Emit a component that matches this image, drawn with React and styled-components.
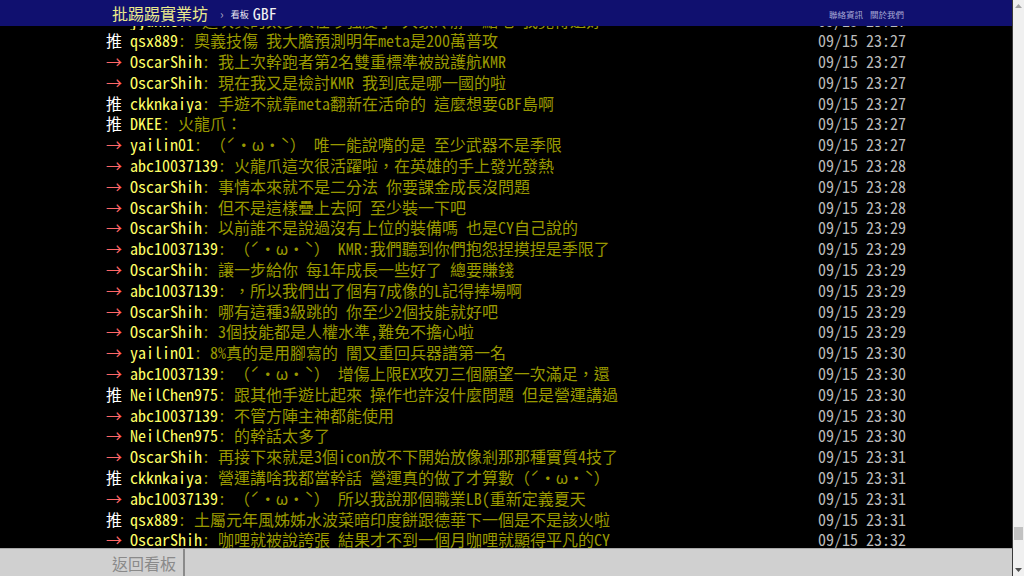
import React from "react";
import styled, { createGlobalStyle } from "styled-components";

const GlobalStyle = createGlobalStyle`
  html, body {
    margin: 0;
    padding: 0;
    height: 100%;
    overflow: hidden;
    background: #000;
  }
  #root { height: 100%; }
`;

const MONO = `"Noto Sans Mono CJK TC", "Noto Sans CJK TC", "Liberation Mono", monospace`;

const Page = styled.div`
  display: flex;
  width: 100vw;
  height: 100vh;
  font-family: ${MONO};
`;

const Main = styled.div`
  flex: 1;
  min-width: 0;
  display: flex;
  flex-direction: column;
  background: #000;
`;

const Topbar = styled.header`
  flex-shrink: 0;
  height: 26px;
  background: #10106f;
  position: relative;
  z-index: 2;
`;

const Bar = styled.div`
  width: 800px;
  height: 100%;
  margin: 0 auto;
  display: flex;
  align-items: center;
  box-sizing: border-box;
  padding: ${(p) => p.$pad || "0"};
`;

const Logo = styled.span`
  font-size: 16px;
  color: #eaea8c;
`;

const Crumb = styled.span`
  font-size: 12px;
  color: #a8a8c4;
  margin: 0 7px 0 12px;
`;

const BoardLabel = styled.span`
  font-size: 9px;
  color: #e8e8f0;
  margin: 2px 4px 0 0;
`;

const BoardName = styled.span`
  font-size: 16px;
  color: #f2f2f2;
`;

const Links = styled.nav`
  margin-left: auto;
  display: flex;
  gap: 7px;
  font-size: 8.5px;
  color: #a9a9d6;
  margin-top: 1px;
`;

const Content = styled.main`
  flex: 1;
  min-height: 0;
  overflow: hidden;
`;

const List = styled.div`
  width: 800px;
  margin: -16.5px auto 0;
  font-size: 16px;
  line-height: 20.8px;
`;

const Row = styled.div`
  display: flex;
  height: 20.8px;
  white-space: pre;
  overflow: hidden;
`;

const Tag = styled.span`
  color: ${(p) => (p.$push ? "#ffffff" : "#ff6666")};
  flex-shrink: 0;
`;

const User = styled.span`
  color: #ffff66;
  flex-shrink: 0;
`;

const Text = styled.span`
  color: #999900;
  overflow: hidden;
`;

const Time = styled.span`
  margin-left: auto;
  color: #bbbbbb;
  flex-shrink: 0;
`;

const Bottombar = styled.footer`
  flex-shrink: 0;
  height: 27px;
  background: #d0d0d0;
  border-top: 1px solid #a8a8a8;
  position: relative;
  z-index: 2;
`;

const BackButton = styled.span`
  height: 100%;
  display: flex;
  align-items: center;
  padding: 0 7px 0 6px;
  border-right: 2px solid #8a8a8a;
  font-size: 16px;
  color: #8a8a8a;
`;

const Scrollbar = styled.div`
  width: 12px;
  flex-shrink: 0;
  background: #f0f0f0;
  border-left: 1px solid #3a3a3a;
  box-sizing: border-box;
  display: flex;
  flex-direction: column;
`;

const Arrow = styled.div`
  height: 12px;
  display: flex;
  align-items: center;
  justify-content: center;
  flex-shrink: 0;
`;

const Track = styled.div`
  flex: 1;
  display: flex;
  flex-direction: column;
  justify-content: flex-end;
  align-items: center;
  padding-bottom: 24px;
`;

const Thumb = styled.div`
  width: 9px;
  height: 13px;
  background: #c2c2c2;
`;

const EMO = "（ˊ・ω・ˋ）";

const rows = [
  ["→", "jyunwei", "這次真的太多人在吵強度了 大家冷靜一點吧 我覺得還好", "09/15 23:27"],
  ["推", "qsx889", "奧義技傷 我大膽預測明年meta是200萬普攻", "09/15 23:27"],
  ["→", "OscarShih", "我上次幹跑者第2名雙重標準被說護航KMR", "09/15 23:27"],
  ["→", "OscarShih", "現在我又是檢討KMR 我到底是哪一國的啦", "09/15 23:27"],
  ["推", "ckknkaiya", "手遊不就靠meta翻新在活命的 這麼想要GBF島啊", "09/15 23:27"],
  ["推", "DKEE", "火龍爪：", "09/15 23:27"],
  ["→", "yailin01", `${EMO} 唯一能說嘴的是 至少武器不是季限`, "09/15 23:27"],
  ["→", "abc10037139", "火龍爪這次很活躍啦，在英雄的手上發光發熱", "09/15 23:28"],
  ["→", "OscarShih", "事情本來就不是二分法 你要課金成長沒問題", "09/15 23:28"],
  ["→", "OscarShih", "但不是這樣疊上去阿 至少裝一下吧", "09/15 23:28"],
  ["→", "OscarShih", "以前誰不是說過沒有上位的裝備嗎 也是CY自己說的", "09/15 23:29"],
  ["→", "abc10037139", `${EMO} KMR:我們聽到你們抱怨捏摸捏是季限了`, "09/15 23:29"],
  ["→", "OscarShih", "讓一步給你 每1年成長一些好了 總要賺錢", "09/15 23:29"],
  ["→", "abc10037139", "，所以我們出了個有7成像的L記得捧場啊", "09/15 23:29"],
  ["→", "OscarShih", "哪有這種3級跳的 你至少2個技能就好吧", "09/15 23:29"],
  ["→", "OscarShih", "3個技能都是人權水準,難免不擔心啦", "09/15 23:29"],
  ["→", "yailin01", "8%真的是用腳寫的 闇又重回兵器譜第一名", "09/15 23:30"],
  ["→", "abc10037139", `${EMO} 增傷上限EX攻刃三個願望一次滿足，還`, "09/15 23:30"],
  ["推", "NeilChen975", "跟其他手遊比起來 操作也許沒什麼問題 但是營運講過", "09/15 23:30"],
  ["→", "abc10037139", "不管方陣主神都能使用", "09/15 23:30"],
  ["→", "NeilChen975", "的幹話太多了", "09/15 23:30"],
  ["→", "OscarShih", "再接下來就是3個icon放不下開始放像剎那那種實質4技了", "09/15 23:31"],
  ["推", "ckknkaiya", `營運講啥我都當幹話 營運真的做了才算數${EMO}`, "09/15 23:31"],
  ["→", "abc10037139", `${EMO} 所以我說那個職業LB(重新定義夏天`, "09/15 23:31"],
  ["推", "qsx889", "土屬元年風姊姊水波菜暗印度餅跟德華下一個是不是該火啦", "09/15 23:31"],
  ["→", "OscarShih", "咖哩就被說誇張 結果才不到一個月咖哩就顯得平凡的CY", "09/15 23:32"],
];

export default function App() {
  return (
    <>
      <GlobalStyle />
      <Page>
        <Main>
          <Topbar>
            <Bar $pad="0 2px 0 6px">
              <Logo>批踢踢實業坊</Logo>
              <Crumb>›</Crumb>
              <BoardLabel>看板</BoardLabel>
              <BoardName>GBF</BoardName>
              <Links>
                <span>聯絡資訊</span>
                <span>關於我們</span>
              </Links>
            </Bar>
          </Topbar>
          <Content>
            <List>
              {rows.map(([tag, user, text, time], i) => (
                <Row key={i}>
                  <Tag $push={tag === "推"}>{tag} </Tag>
                  <User>{user}</User>
                  <Text>: {text}</Text>
                  <Time>{time}</Time>
                </Row>
              ))}
            </List>
          </Content>
          <Bottombar>
            <Bar>
              <BackButton>返回看板</BackButton>
            </Bar>
          </Bottombar>
        </Main>
        <Scrollbar>
          <Arrow>
            <svg width="7" height="4" viewBox="0 0 7 4">
              <path d="M0 4 L3.5 0 L7 4 Z" fill="#a3a3a3" />
            </svg>
          </Arrow>
          <Track>
            <Thumb />
          </Track>
          <Arrow>
            <svg width="7" height="4" viewBox="0 0 7 4">
              <path d="M0 0 L3.5 4 L7 0 Z" fill="#505050" />
            </svg>
          </Arrow>
        </Scrollbar>
      </Page>
    </>
  );
}
